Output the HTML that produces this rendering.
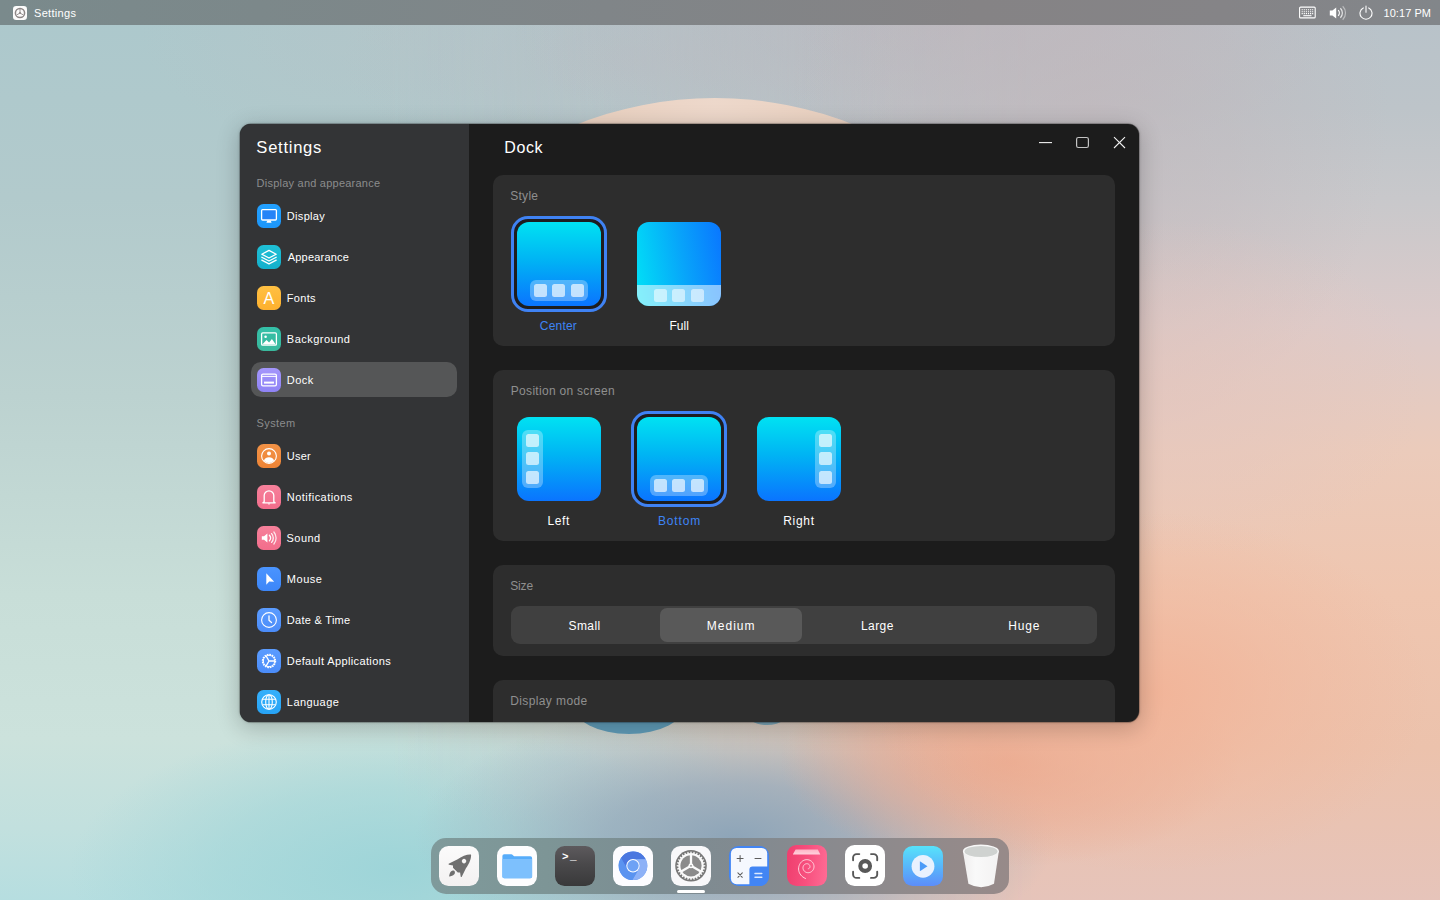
<!DOCTYPE html>
<html lang="en">
<head>
<meta charset="utf-8">
<title>Settings - Dock</title>
<style>
html,body{margin:0;padding:0}
body{width:1440px;height:900px;position:relative;overflow:hidden;font-family:"Liberation Sans", sans-serif;background:#c4d4d4}
.abs{position:absolute}
.t{position:absolute;white-space:pre;line-height:1;font-family:"Liberation Sans", sans-serif}
#wall{position:absolute;left:0;top:0;width:1440px;height:900px;overflow:hidden;
  background:linear-gradient(180deg,#b7c2c9 0%,#bdc4c9 12%,#c8c8cb 22%,#dccbca 36%,#ebcbbb 50%,#efc6b0 66%,#ecc2ac 83%,#e6c4ba 100%)}
#wl{position:absolute;left:0;top:0;width:1440px;height:900px;
  background:linear-gradient(180deg,#acc8cc 0%,#b2cacc 22%,#bcd2d0 44%,#c8ded8 66%,#cce2dc 82%,#c2e0de 92%,#b6dee0 100%);
  -webkit-mask-image:linear-gradient(90deg,#000 0%,#000 27%,rgba(0,0,0,.6) 45%,rgba(0,0,0,.15) 61%,transparent 72%);
  mask-image:linear-gradient(90deg,#000 0%,#000 27%,rgba(0,0,0,.6) 45%,rgba(0,0,0,.15) 61%,transparent 72%)}
#wr{position:absolute;left:0;top:0;width:1440px;height:900px;
  background:
   radial-gradient(ellipse 280px 180px at 1150px 692px, rgba(242,180,152,.95) 0%, rgba(242,183,156,.5) 50%, rgba(242,186,160,0) 100%),
   radial-gradient(ellipse 230px 105px at 1010px 762px, rgba(232,166,140,.95) 0%, rgba(232,168,144,.5) 55%, rgba(232,170,146,0) 100%),
   radial-gradient(ellipse 320px 135px at 735px 838px, rgba(140,164,184,.98) 0%, rgba(144,166,186,.72) 40%, rgba(150,168,186,.3) 72%, rgba(150,170,188,0) 100%),
   radial-gradient(ellipse 170px 60px at 560px 765px, rgba(182,210,214,.6) 0%, rgba(182,210,214,.3) 55%, rgba(182,210,214,0) 100%),
   radial-gradient(ellipse 330px 150px at 400px 870px, rgba(156,212,216,.95) 0%, rgba(158,213,216,.55) 55%, rgba(164,216,218,0) 100%),
   radial-gradient(ellipse 250px 170px at 1175px 390px, rgba(228,198,190,.7) 0%, rgba(228,198,190,.35) 55%, rgba(228,198,190,0) 100%),
   radial-gradient(ellipse 300px 330px at 1090px 110px, rgba(194,182,186,.62) 0%, rgba(194,182,186,.36) 50%, rgba(194,184,188,0) 100%),
   radial-gradient(ellipse 420px 150px at 930px 20px, rgba(190,178,184,.5) 0%, rgba(190,180,186,.25) 55%, rgba(190,180,186,0) 100%),
   radial-gradient(ellipse 300px 120px at 640px 60px, rgba(186,188,194,.5) 0%, rgba(186,188,194,0) 100%),
   radial-gradient(ellipse 260px 130px at 400px 30px, rgba(182,196,200,.6) 0%, rgba(182,196,200,.3) 55%, rgba(182,196,200,0) 100%)}
#sunclip{position:absolute;left:300px;top:90px;width:840px;height:300px;overflow:hidden}
#sun{position:absolute;left:41px;top:8px;width:748px;height:748px;border-radius:50%;
  background:radial-gradient(circle at 50% 0%,#edd8cb 0%,#ead2c2 12%,#e6c6b4 100%)}
#blob1{position:absolute;left:573px;top:676px;width:112px;height:58px;border-radius:50%;background:#5f9ab6}
#blob2{position:absolute;left:742px;top:690px;width:50px;height:35px;border-radius:50%;background:#7aa4b6}
#topbar{position:absolute;left:0;top:0;width:1440px;height:25px;
  background:linear-gradient(90deg,#7a8a8c 0%,#7c888a 18%,#808588 42%,#858385 68%,#858487 85%,#82868a 100%)}
#win{position:absolute;left:239.600px;top:123.600px;width:899px;height:598.300px;border-radius:11px;overflow:hidden;background:#1c1c1c;
  box-shadow:0 0 0 .5px rgba(0,0,0,.35)}
#winshadow{position:absolute;left:239.600px;top:123.600px;width:899px;height:598.300px;border-radius:11px;
  box-shadow:0 5px 22px 2px rgba(0,0,0,.2),0 0 3px rgba(0,0,0,.3)}
#side{position:absolute;left:239.600px;top:123.600px;width:229.600px;height:598.300px;background:#333436;border-radius:11px 0 0 11px}
#sel{position:absolute;left:251px;top:362px;width:206px;height:35px;border-radius:10px;background:#555657}
.card{position:absolute;left:493px;width:622px;background:#2d2d2d;border-radius:10px}
.thumb{width:84px;height:84px;border-radius:12px;overflow:hidden}
#seg{position:absolute;left:511px;top:606px;width:586px;height:38px;border-radius:9px;background:#404040}
#segsel{position:absolute;left:660px;top:608px;width:142px;height:34px;border-radius:7px;background:#595959}
#dock{position:absolute;left:431px;top:838px;width:578px;height:56px;border-radius:15px;
  background:linear-gradient(90deg,#7f9a9b 0%,#7d9596 20%,#7c8c92 40%,#828a90 55%,#8a8a8e 70%,#918a8b 85%,#978a89 100%)}
.tile{width:40px;border-radius:9.500px;overflow:hidden}
#ind{position:absolute;left:677px;top:890px;width:28px;height:3px;border-radius:1.500px;background:#fff}
</style>
</head>
<body>
<div id="wall"><div id="wl"></div><div id="wr"></div><div id="sunclip"><div id="sun"></div></div><div id="blob1"></div><div id="blob2"></div></div>

<div id="topbar"></div>
<svg class="abs" style="left:13px;top:6px" width="14" height="14" viewBox="0 0 14 14">
 <rect width="14" height="14" rx="3.200" fill="#fbfbfb"/>
 <circle cx="7" cy="7" r="4.600" fill="none" stroke="#8d8787" stroke-width="1.500"/>
 <path d="M7 7V3M7 7l3.400 2M7 7L3.600 9" stroke="#9a9494" stroke-width="1" fill="none"/>
 <circle cx="7" cy="7" r="1" fill="#8d8787"/>
</svg>
<span class="t" id="tb_title" style="left:33.99px;top:7.94px;font-size:11px;letter-spacing:0.320px;color:#ffffff;font-weight:400">Settings</span>
<svg class="abs" style="left:1299px;top:6px" width="17" height="13" viewBox="0 0 17 13">
 <rect x=".600" y="1.100" width="15.600" height="10.800" rx="1" fill="none" stroke="#fff" stroke-width="1.100"/>
 <path d="M2.600 3.700h11.600M2.600 5.700h11.600M2.600 7.600h11.600" stroke="#fff" stroke-width="1.100" stroke-dasharray="1.200 .9"/>
 <path d="M4.300 9.700h8.200" stroke="#fff" stroke-width="1.100"/>
</svg>
<svg class="abs" style="left:1329px;top:5px" width="18" height="16" viewBox="0 0 18 16">
 <path d="M.8 5.500h2.600l3.800-3v11l-3.800-3H.8z" fill="#fff"/>
 <path d="M9.200 5.200a4 4 0 0 1 0 5.600" fill="none" stroke="#fff" stroke-width="1.200"/>
 <path d="M11.400 3.300a6.600 6.600 0 0 1 0 9.400" fill="none" stroke="#fff" stroke-width="1.200" opacity=".8"/>
 <path d="M13.700 1.300a9.400 9.400 0 0 1 0 13.400" fill="none" stroke="#fff" stroke-width="1.200" opacity=".45"/>
</svg>
<svg class="abs" style="left:1359px;top:5px" width="14" height="15" viewBox="0 0 14 15">
 <path d="M4.300 2.900a6 6 0 1 0 5.400 0" fill="none" stroke="#fff" stroke-width="1.100" stroke-linecap="round"/>
 <path d="M7 1v6.300" stroke="#fff" stroke-width="1.100" stroke-linecap="round"/>
</svg>
<span class="t" id="tb_clock" style="left:1383.51px;top:7.94px;font-size:11px;letter-spacing:0.057px;color:#ffffff;font-weight:400">10:17 PM</span>

<div id="winshadow"></div>
<div id="win"></div>
<div id="side"></div>
<div id="sel"></div>
<span class="t" id="sb_title" style="left:256.36px;top:140.20px;font-size:16.6px;letter-spacing:0.722px;color:#ffffff;font-weight:400">Settings</span>
<span class="t" id="sb_h1" style="left:256.61px;top:177.94px;font-size:11px;letter-spacing:0.227px;color:#8b8c8d;font-weight:400">Display and appearance</span>
<svg class="abs" style="left:257px;top:204px" width="24" height="24" viewBox="0 0 24 24"><defs><linearGradient id="g_display" x1="0" y1="0" x2="0" y2="1"><stop offset="0" stop-color="#22a0ff"/><stop offset="1" stop-color="#1c96fa"/></linearGradient></defs><rect width="24" height="24" rx="6.500" fill="url(#g_display)"/><rect x="4.6" y="5.6" width="14.8" height="10.4" rx="1" fill="#2684f7" stroke="#fff" stroke-width="1.3"/><path d="M10.3 16.4h3.4l.9 2.3H9.4z" fill="#fff"/></svg><svg class="abs" style="left:257px;top:245px" width="24" height="24" viewBox="0 0 24 24"><defs><linearGradient id="g_appearance" x1="0" y1="0" x2="0" y2="1"><stop offset="0" stop-color="#1fc0d6"/><stop offset="1" stop-color="#14b0cc"/></linearGradient></defs><rect width="24" height="24" rx="6.500" fill="url(#g_appearance)"/><path d="M12 5.400l7.200 3.800-7.200 3.800-7.200-3.800z" stroke="#fff" fill="none" stroke-width="1.3" stroke-linecap="round" stroke-linejoin="round"/><path d="M4.800 12.200l7.200 3.800 7.200-3.800" stroke="#fff" fill="none" stroke-width="1.3" stroke-linecap="round" stroke-linejoin="round"/><path d="M4.800 15.100l7.200 3.800 7.200-3.800" stroke="#fff" fill="none" stroke-width="1.3" stroke-linecap="round" stroke-linejoin="round"/></svg><svg class="abs" style="left:257px;top:286px" width="24" height="24" viewBox="0 0 24 24"><defs><linearGradient id="g_fonts" x1="0" y1="0" x2="0" y2="1"><stop offset="0" stop-color="#ffc043"/><stop offset="1" stop-color="#fdb02e"/></linearGradient></defs><rect width="24" height="24" rx="6.500" fill="url(#g_fonts)"/><text x="12" y="17.800" text-anchor="middle" font-family='"Liberation Sans", sans-serif' font-size="16.200" fill="#fff">A</text></svg><svg class="abs" style="left:257px;top:327px" width="24" height="24" viewBox="0 0 24 24"><defs><linearGradient id="g_background" x1="0" y1="0" x2="0" y2="1"><stop offset="0" stop-color="#34c0a8"/><stop offset="1" stop-color="#3ab89c"/></linearGradient></defs><rect width="24" height="24" rx="6.500" fill="url(#g_background)"/><rect x="4.6" y="5.9" width="14.8" height="12.2" rx="1.2" stroke="#fff" stroke-width="1.3" fill="none"/><circle cx="8.6" cy="9.7" r="1.3" fill="#fff"/><path d="M5.2 17.5l4.3-4.6 2.6 2.6 2.8-3.6 3.9 5.6z" fill="#fff"/></svg><svg class="abs" style="left:257px;top:368px" width="24" height="24" viewBox="0 0 24 24"><defs><linearGradient id="g_dock" x1="0" y1="0" x2="0" y2="1"><stop offset="0" stop-color="#a496fb"/><stop offset="1" stop-color="#8f83f5"/></linearGradient></defs><rect width="24" height="24" rx="6.500" fill="url(#g_dock)"/><rect x="4.6" y="6.2" width="14.8" height="11.6" rx="1.4" stroke="#fff" stroke-width="1.3" fill="none"/><path d="M4.6 8.4h14.8" stroke="#fff" stroke-width="1"/><rect x="7" y="13.6" width="10" height="2" fill="#fff"/></svg><svg class="abs" style="left:257px;top:444px" width="24" height="24" viewBox="0 0 24 24"><defs><linearGradient id="g_user" x1="0" y1="0" x2="0" y2="1"><stop offset="0" stop-color="#f29246"/><stop offset="1" stop-color="#ee8436"/></linearGradient></defs><rect width="24" height="24" rx="6.500" fill="url(#g_user)"/><circle cx="12" cy="12" r="7.4" stroke="#fff" stroke-width="1.1" fill="none"/><circle cx="12" cy="9.6" r="2" fill="#fff"/><path d="M6.9 16.6a5.6 5.6 0 0 1 10.2 0A7 7 0 0 1 12 19a7 7 0 0 1-5.100-2.400z" fill="#fff"/></svg><svg class="abs" style="left:257px;top:485px" width="24" height="24" viewBox="0 0 24 24"><defs><linearGradient id="g_notifications" x1="0" y1="0" x2="0" y2="1"><stop offset="0" stop-color="#f6819b"/><stop offset="1" stop-color="#f26d8b"/></linearGradient></defs><rect width="24" height="24" rx="6.500" fill="url(#g_notifications)"/><path d="M7.2 16.800v-6.200a4.800 4.800 0 0 1 9.600 0v6.200l1.300 1H5.900z" stroke="#fff" fill="none" stroke-width="1.3" stroke-linecap="round" stroke-linejoin="round" stroke-width="1.1"/><path d="M10.600 18.500a1.500 1.500 0 0 0 2.800 0z" fill="#fff"/></svg><svg class="abs" style="left:257px;top:526px" width="24" height="24" viewBox="0 0 24 24"><defs><linearGradient id="g_sound" x1="0" y1="0" x2="0" y2="1"><stop offset="0" stop-color="#f6819b"/><stop offset="1" stop-color="#f26d8b"/></linearGradient></defs><rect width="24" height="24" rx="6.500" fill="url(#g_sound)"/><path d="M4.800 10.200h2.200l3.400-2.800v9.200l-3.400-2.800H4.800z" fill="#fff"/><path d="M12.400 9.300a4 4 0 0 1 0 5.400" stroke="#fff" fill="none" stroke-width="1.3" stroke-linecap="round" stroke-linejoin="round" stroke-width="1.2"/><path d="M14.600 7.600a6.600 6.600 0 0 1 0 8.800" stroke="#fff" fill="none" stroke-width="1.3" stroke-linecap="round" stroke-linejoin="round" stroke-width="1.2" opacity=".9"/><path d="M16.900 6a9.300 9.300 0 0 1 0 12" stroke="#fff" fill="none" stroke-width="1.3" stroke-linecap="round" stroke-linejoin="round" stroke-width="1.2" opacity=".8"/></svg><svg class="abs" style="left:257px;top:567px" width="24" height="24" viewBox="0 0 24 24"><defs><linearGradient id="g_mouse" x1="0" y1="0" x2="0" y2="1"><stop offset="0" stop-color="#4a94ff"/><stop offset="1" stop-color="#3c86f8"/></linearGradient></defs><rect width="24" height="24" rx="6.500" fill="url(#g_mouse)"/><path d="M9.300 6.200v11.600l2.900-3.200 5 .1z" fill="#fff"/></svg><svg class="abs" style="left:257px;top:608px" width="24" height="24" viewBox="0 0 24 24"><defs><linearGradient id="g_datetime" x1="0" y1="0" x2="0" y2="1"><stop offset="0" stop-color="#5b9cff"/><stop offset="1" stop-color="#4b8cf9"/></linearGradient></defs><rect width="24" height="24" rx="6.500" fill="url(#g_datetime)"/><circle cx="12" cy="12" r="7.400" stroke="#fff" stroke-width="1.1" fill="none"/><path d="M12 7.800v4.400l2.500 2.300" stroke="#fff" fill="none" stroke-width="1.3" stroke-linecap="round" stroke-linejoin="round" stroke-width="1.2"/></svg><svg class="abs" style="left:257px;top:649px" width="24" height="24" viewBox="0 0 24 24"><defs><linearGradient id="g_defaultapps" x1="0" y1="0" x2="0" y2="1"><stop offset="0" stop-color="#5b9cff"/><stop offset="1" stop-color="#4b8cf9"/></linearGradient></defs><rect width="24" height="24" rx="6.500" fill="url(#g_defaultapps)"/><circle cx="12" cy="12" r="6.600" stroke="#fff" stroke-width="1.2" fill="none" stroke-dasharray="1.7 0.9"/><circle cx="12" cy="12" r="5.700" stroke="#fff" stroke-width="1" fill="none"/><path d="M12 12l5.600 0M12 12l-2.800 4.900M12 12l-2.800-4.900" stroke="#fff" fill="none" stroke-width="1.3" stroke-linecap="round" stroke-linejoin="round" stroke-width="1.1"/></svg><svg class="abs" style="left:257px;top:690px" width="24" height="24" viewBox="0 0 24 24"><defs><linearGradient id="g_language" x1="0" y1="0" x2="0" y2="1"><stop offset="0" stop-color="#35b0fb"/><stop offset="1" stop-color="#27a3f5"/></linearGradient></defs><rect width="24" height="24" rx="6.500" fill="url(#g_language)"/><circle cx="12" cy="12" r="7.300" stroke="#fff" stroke-width="1.1" fill="none"/><ellipse cx="12" cy="12" rx="3.300" ry="7.300" stroke="#fff" stroke-width="1.1" fill="none"/><path d="M5.600 9.300h12.800M5.600 14.700h12.800M12 4.700v14.600" stroke="#fff" stroke-width="1.1" fill="none"/></svg>
<span class="t" id="sb_1" style="left:286.85px;top:210.94px;font-size:11px;letter-spacing:0.308px;color:#ffffff;font-weight:400">Display</span><span class="t" id="sb_2" style="left:287.69px;top:251.94px;font-size:11px;letter-spacing:0.215px;color:#ffffff;font-weight:400">Appearance</span><span class="t" id="sb_3" style="left:286.85px;top:292.94px;font-size:11px;letter-spacing:0.300px;color:#ffffff;font-weight:400">Fonts</span><span class="t" id="sb_4" style="left:286.85px;top:333.94px;font-size:11px;letter-spacing:0.488px;color:#ffffff;font-weight:400">Background</span><span class="t" id="sb_5" style="left:286.85px;top:374.94px;font-size:11px;letter-spacing:0.453px;color:#ffffff;font-weight:400">Dock</span><span class="t" id="sb_6" style="left:286.85px;top:450.94px;font-size:11px;letter-spacing:0.187px;color:#ffffff;font-weight:400">User</span><span class="t" id="sb_7" style="left:286.85px;top:491.94px;font-size:11px;letter-spacing:0.455px;color:#ffffff;font-weight:400">Notifications</span><span class="t" id="sb_8" style="left:286.61px;top:532.94px;font-size:11px;letter-spacing:0.420px;color:#ffffff;font-weight:400">Sound</span><span class="t" id="sb_9" style="left:286.85px;top:573.94px;font-size:11px;letter-spacing:0.520px;color:#ffffff;font-weight:400">Mouse</span><span class="t" id="sb_10" style="left:286.85px;top:614.94px;font-size:11px;letter-spacing:0.280px;color:#ffffff;font-weight:400">Date &amp; Time</span><span class="t" id="sb_11" style="left:286.85px;top:655.94px;font-size:11px;letter-spacing:0.379px;color:#ffffff;font-weight:400">Default Applications</span><span class="t" id="sb_12" style="left:286.85px;top:696.94px;font-size:11px;letter-spacing:0.435px;color:#ffffff;font-weight:400">Language</span>
<span class="t" id="sb_h2" style="left:256.61px;top:417.94px;font-size:11px;letter-spacing:0.368px;color:#8b8c8d;font-weight:400">System</span>

<span class="t" id="m_title" style="left:504.36px;top:139.71px;font-size:16px;letter-spacing:0.560px;color:#ffffff;font-weight:400">Dock</span>
<svg class="abs" style="left:1034px;top:132px" width="100" height="22" viewBox="0 0 100 22">
 <path d="M5 10.600h13" stroke="#f2f2f2" stroke-width="1.100"/>
 <rect x="42.600" y="5.500" width="11.800" height="10" rx="1.800" fill="none" stroke="#c4c4c4" stroke-width="1.200"/>
 <path d="M80 5.200l11 10.800M91 5.200L80 16" stroke="#f2f2f2" stroke-width="1.100"/>
</svg>

<div class="card" style="top:175px;height:171px"></div>
<div class="card" style="top:370px;height:171px"></div>
<div class="card" style="top:565px;height:91px"></div>
<div class="card" style="top:680px;height:42px;border-radius:10px 10px 0 0"></div>

<span class="t" id="c1_label" style="left:510.16px;top:190.09px;font-size:12px;letter-spacing:0.300px;color:#8f8f8f;font-weight:400">Style</span>
<div class="abs" style="left:511px;top:216px;width:96px;height:96px;border-radius:17px;box-sizing:border-box;border:3px solid #3f82f3;background:#1d1d1f"></div><div class="abs thumb" style="left:517px;top:222px;background:linear-gradient(180deg,#00e2f2 0%,#00b4f4 45%,#0a74ff 100%)"><div style="position:absolute;left:13px;top:58px;width:58px;height:20.500px;border-radius:6px;background:rgba(255,255,255,.3)"></div><div style="position:absolute;width:13px;height:13px;border-radius:2.500px;background:rgba(255,255,255,.66);left:17px;top:61.700px"></div><div style="position:absolute;width:13px;height:13px;border-radius:2.500px;background:rgba(255,255,255,.66);left:35.3px;top:61.700px"></div><div style="position:absolute;width:13px;height:13px;border-radius:2.500px;background:rgba(255,255,255,.66);left:53.7px;top:61.700px"></div></div>
<div class="abs thumb" style="left:637px;top:222px;background:linear-gradient(80deg,#00e2f6 0%,#08a4fa 55%,#0a76ff 100%)"><div style="position:absolute;left:0;top:63px;width:84px;height:21px;background:rgba(255,255,255,.52)"></div><div style="position:absolute;width:13px;height:13px;border-radius:2.500px;background:rgba(255,255,255,.66);left:17px;top:67px;background:rgba(255,255,255,.55)"></div><div style="position:absolute;width:13px;height:13px;border-radius:2.500px;background:rgba(255,255,255,.66);left:35.3px;top:67px;background:rgba(255,255,255,.55)"></div><div style="position:absolute;width:13px;height:13px;border-radius:2.500px;background:rgba(255,255,255,.66);left:53.7px;top:67px;background:rgba(255,255,255,.55)"></div></div>
<span class="t" id="c1_center" style="left:539.82px;top:320.09px;font-size:12px;letter-spacing:0.208px;color:#3d84f5;font-weight:400">Center</span><span class="t" id="c1_full" style="left:669.44px;top:320.09px;font-size:12px;letter-spacing:0.026px;color:#ffffff;font-weight:400">Full</span>

<span class="t" id="c2_label" style="left:510.82px;top:385.09px;font-size:12px;letter-spacing:0.295px;color:#8f8f8f;font-weight:400">Position on screen</span>
<div class="abs thumb" style="left:517px;top:417px;background:linear-gradient(180deg,#00e2f2 0%,#00b4f4 45%,#0a74ff 100%)"><div style="position:absolute;left:5.300px;top:13px;width:20.500px;height:58px;border-radius:6px;background:rgba(255,255,255,.3)"></div><div style="position:absolute;width:13px;height:13px;border-radius:2.500px;background:rgba(255,255,255,.66);left:9px;top:17px"></div><div style="position:absolute;width:13px;height:13px;border-radius:2.500px;background:rgba(255,255,255,.66);left:9px;top:35.3px"></div><div style="position:absolute;width:13px;height:13px;border-radius:2.500px;background:rgba(255,255,255,.66);left:9px;top:53.7px"></div></div>
<div class="abs" style="left:631px;top:411px;width:96px;height:96px;border-radius:17px;box-sizing:border-box;border:3px solid #3f82f3;background:#1d1d1f"></div><div class="abs thumb" style="left:637px;top:417px;background:linear-gradient(180deg,#00e2f2 0%,#00b4f4 45%,#0a74ff 100%)"><div style="position:absolute;left:13px;top:58px;width:58px;height:20.500px;border-radius:6px;background:rgba(255,255,255,.3)"></div><div style="position:absolute;width:13px;height:13px;border-radius:2.500px;background:rgba(255,255,255,.66);left:17px;top:61.700px"></div><div style="position:absolute;width:13px;height:13px;border-radius:2.500px;background:rgba(255,255,255,.66);left:35.3px;top:61.700px"></div><div style="position:absolute;width:13px;height:13px;border-radius:2.500px;background:rgba(255,255,255,.66);left:53.7px;top:61.700px"></div></div>
<div class="abs thumb" style="left:757px;top:417px;background:linear-gradient(180deg,#00e2f2 0%,#00b4f4 45%,#0a74ff 100%)"><div style="position:absolute;left:58.200px;top:13px;width:20.500px;height:58px;border-radius:6px;background:rgba(255,255,255,.3)"></div><div style="position:absolute;width:13px;height:13px;border-radius:2.500px;background:rgba(255,255,255,.66);left:62px;top:17px"></div><div style="position:absolute;width:13px;height:13px;border-radius:2.500px;background:rgba(255,255,255,.66);left:62px;top:35.3px"></div><div style="position:absolute;width:13px;height:13px;border-radius:2.500px;background:rgba(255,255,255,.66);left:62px;top:53.7px"></div></div>
<span class="t" id="c2_left" style="left:547.40px;top:515.09px;font-size:12px;letter-spacing:0.613px;color:#ffffff;font-weight:400">Left</span><span class="t" id="c2_bottom" style="left:657.92px;top:515.09px;font-size:12px;letter-spacing:0.848px;color:#3d84f5;font-weight:400">Bottom</span><span class="t" id="c2_right" style="left:783.16px;top:515.09px;font-size:12px;letter-spacing:0.720px;color:#ffffff;font-weight:400">Right</span>

<span class="t" id="c3_label" style="left:510.16px;top:580.09px;font-size:12px;letter-spacing:-0.105px;color:#8f8f8f;font-weight:400">Size</span>
<div id="seg"></div><div id="segsel"></div>
<span class="t" id="c3_small" style="left:568.44px;top:620.09px;font-size:12px;letter-spacing:0.440px;color:#ffffff;font-weight:400">Small</span><span class="t" id="c3_medium" style="left:706.78px;top:620.09px;font-size:12px;letter-spacing:1.024px;color:#ffffff;font-weight:400">Medium</span><span class="t" id="c3_large" style="left:860.92px;top:620.09px;font-size:12px;letter-spacing:0.440px;color:#ffffff;font-weight:400">Large</span><span class="t" id="c3_huge" style="left:1008.16px;top:620.09px;font-size:12px;letter-spacing:0.879px;color:#ffffff;font-weight:400">Huge</span>
<span class="t" id="c4_label" style="left:510.16px;top:695.09px;font-size:12px;letter-spacing:0.394px;color:#8f8f8f;font-weight:400">Display mode</span>

<div id="dock"></div>
<div class="abs tile" style="left:439px;top:845.7px;height:40.3px;background:linear-gradient(180deg,#fbfbfb,#f3f1f1)"><svg width="40" height="40.3" viewBox="0 0 40 40.3" style="display:block"><g transform="matrix(.7071 -.7071 .7071 .7071 21.5 19)" fill="#707070"><path d="M14.900 0C13-2.600 7.500-5.300 1.500-6.200L-7.600-9.200Q-8.400-9-8-8.300L-5.600-5-7.200-3.400V3.400L-5.600 5-8 8.300Q-8.400 9-7.600 9.200L1.500 6.200C7.500 5.300 13 2.600 14.900 0z"/><path d="M-8.500 0C-9.400-3-12.500-2.800-16.200 0-12.500 2.800-9.400 3-8.500 0z"/><circle cx="5.200" cy="-.2" r="2.200" fill="#f7f6f6"/></g></svg></div><div class="abs tile" style="left:497px;top:845.7px;height:40.3px;background:#fdfdfe"><svg width="40" height="40.3" viewBox="0 0 40 40.3" style="display:block"><path d="M5.400 10a1.800 1.800 0 0 1 1.800-1.800h7.100c.6 0 1 .2 1.400.7l1.400 1.400h16.200a1.800 1.800 0 0 1 1.800 1.800v18.400a1.800 1.800 0 0 1-1.800 1.800H7.200a1.800 1.800 0 0 1-1.800-1.800z" fill="#56acfa"/><path d="M5.400 13h29.700v17.500a1.800 1.800 0 0 1-1.800 1.800H7.200a1.800 1.800 0 0 1-1.800-1.800z" fill="#7dc0fd"/></svg></div><div class="abs tile" style="left:555px;top:845.7px;height:40.3px;background:linear-gradient(180deg,#5d5a5d 0%,#4a494b 45%,#39393a 100%)"><svg width="40" height="40.3" viewBox="0 0 40 40.3" style="display:block"><text x="7" y="14.200" font-family='"Liberation Mono", monospace' font-size="11" font-weight="700" letter-spacing="1.300" fill="#fff">&gt;_</text></svg></div><div class="abs tile" style="left:613px;top:845.7px;height:40.3px;background:#fcfcff"><svg width="40" height="40.3" viewBox="0 0 40 40.3" style="display:block"><g transform="translate(20 19.800)"><circle r="14.300" fill="#5a93f0"/><path d="M0-6.600H12.690A14.300 14.300 0 0 0-12.060-7.690L-5.720 3.300A6.600 6.600 0 0 1 0-6.600z" fill="#4a77e0"/><path d="M0-6.600H12.690A14.300 14.300 0 0 0-12.060-7.690L-5.720 3.300A6.600 6.600 0 0 1 0-6.600z" fill="#8db1f7" transform="rotate(120)"/><path d="M0-6.600H12.690A14.300 14.300 0 0 0-12.060-7.690L-5.720 3.300A6.600 6.600 0 0 1 0-6.600z" fill="#5a93f0" transform="rotate(240)"/><circle r="6.700" fill="#fff"/><circle r="5.700" fill="#6ea2f5"/></g></svg></div><div class="abs tile" style="left:671px;top:845.7px;height:40.3px;background:#f8f8fa"><svg width="40" height="40.3" viewBox="0 0 40 40.3" style="display:block"><g transform="translate(20 19.800)"><circle r="15.800" fill="#777"/><g fill="#fafafa"><circle r="12.700"/><path d="M-.9-12.200L-.45-14.300H.45L.9-12.200z" transform="rotate(0.00)"/><path d="M-.9-12.200L-.45-14.300H.45L.9-12.200z" transform="rotate(12.86)"/><path d="M-.9-12.200L-.45-14.300H.45L.9-12.200z" transform="rotate(25.71)"/><path d="M-.9-12.200L-.45-14.300H.45L.9-12.200z" transform="rotate(38.57)"/><path d="M-.9-12.200L-.45-14.300H.45L.9-12.200z" transform="rotate(51.43)"/><path d="M-.9-12.200L-.45-14.300H.45L.9-12.200z" transform="rotate(64.29)"/><path d="M-.9-12.200L-.45-14.300H.45L.9-12.200z" transform="rotate(77.14)"/><path d="M-.9-12.200L-.45-14.300H.45L.9-12.200z" transform="rotate(90.00)"/><path d="M-.9-12.200L-.45-14.300H.45L.9-12.200z" transform="rotate(102.86)"/><path d="M-.9-12.200L-.45-14.300H.45L.9-12.200z" transform="rotate(115.71)"/><path d="M-.9-12.200L-.45-14.300H.45L.9-12.200z" transform="rotate(128.57)"/><path d="M-.9-12.200L-.45-14.300H.45L.9-12.200z" transform="rotate(141.43)"/><path d="M-.9-12.200L-.45-14.300H.45L.9-12.200z" transform="rotate(154.29)"/><path d="M-.9-12.200L-.45-14.300H.45L.9-12.200z" transform="rotate(167.14)"/><path d="M-.9-12.200L-.45-14.300H.45L.9-12.200z" transform="rotate(180.00)"/><path d="M-.9-12.200L-.45-14.300H.45L.9-12.200z" transform="rotate(192.86)"/><path d="M-.9-12.200L-.45-14.300H.45L.9-12.200z" transform="rotate(205.71)"/><path d="M-.9-12.200L-.45-14.300H.45L.9-12.200z" transform="rotate(218.57)"/><path d="M-.9-12.200L-.45-14.300H.45L.9-12.200z" transform="rotate(231.43)"/><path d="M-.9-12.200L-.45-14.300H.45L.9-12.200z" transform="rotate(244.29)"/><path d="M-.9-12.200L-.45-14.300H.45L.9-12.200z" transform="rotate(257.14)"/><path d="M-.9-12.200L-.45-14.300H.45L.9-12.200z" transform="rotate(270.00)"/><path d="M-.9-12.200L-.45-14.300H.45L.9-12.200z" transform="rotate(282.86)"/><path d="M-.9-12.200L-.45-14.300H.45L.9-12.200z" transform="rotate(295.71)"/><path d="M-.9-12.200L-.45-14.300H.45L.9-12.200z" transform="rotate(308.57)"/><path d="M-.9-12.200L-.45-14.300H.45L.9-12.200z" transform="rotate(321.43)"/><path d="M-.9-12.200L-.45-14.300H.45L.9-12.200z" transform="rotate(334.29)"/><path d="M-.9-12.200L-.45-14.300H.45L.9-12.200z" transform="rotate(347.14)"/></g><circle r="10.600" fill="#8b8b8b"/><g stroke="#fafafa" stroke-width="2.300" stroke-linecap="butt"><path d="M0 0V-11.400" transform="rotate(0)"/><path d="M0 0V-11.400" transform="rotate(120)"/><path d="M0 0V-11.400" transform="rotate(240)"/></g><circle r="2.500" fill="#fafafa"/><circle r=".9" fill="#8b8b8b"/></g></svg></div><div class="abs tile" style="left:729px;top:845.8px;height:40px;background:#4285f4"><svg width="40" height="40" viewBox="0 0 40 40" style="display:block"><rect x="1.900" y="1.900" width="36.300" height="36.300" rx="5.600" fill="#f5f8fe"/><path d="M20.400 23.600a3.200 3.200 0 0 1 3.200-3.200H40V40H20.400z" fill="#4285f4"/><g stroke="#5c5c5c" stroke-width="1.050" stroke-linecap="round"><path d="M8.100 12.400h6M11.100 9.400v6M26 12.400h6M8.900 26.900l4.400 4.400M13.300 26.900l-4.400 4.400"/></g><g stroke="#dce9ff" stroke-width="1.500" stroke-linecap="round"><path d="M26 27.600h6.800M26 31.200h6.800"/></g></svg></div><div class="abs tile" style="left:787px;top:845px;height:40.5px;background:linear-gradient(95deg,#ef3e6e 0%,#f7507e 50%,#ff6c95 100%)"><svg width="40" height="40.5" viewBox="0 0 40 40.5" style="display:block"><defs><linearGradient id="g_deb" x1="0" y1="0" x2="0" y2="1"><stop offset="0" stop-color="#ffb4c6"/><stop offset="1" stop-color="#ffd3de"/></linearGradient></defs><path d="M8.600 4.600h22.200l2.500 5H5.800z" fill="url(#g_deb)"/><path d="M21.25 23.73L21.49 23.69L21.73 23.61L21.97 23.49L22.20 23.33L22.41 23.13L22.60 22.90L22.76 22.63L22.88 22.33L22.97 22.01L23.00 21.67L22.99 21.31L22.93 20.95L22.81 20.59L22.64 20.24L22.42 19.91L22.15 19.60L21.83 19.33L21.46 19.10L21.06 18.91L20.62 18.78L20.16 18.71L19.68 18.70L19.19 18.76L18.71 18.89L18.24 19.09L17.79 19.35L17.37 19.68L16.99 20.07L16.66 20.52L16.39 21.02L16.18 21.56L16.05 22.14L15.99 22.74L16.02 23.35L16.13 23.96L16.33 24.57L16.61 25.15L16.98 25.70L17.42 26.20L17.93 26.65L18.51 27.03L19.14 27.33L19.82 27.55L20.54 27.68L21.28 27.71L22.02 27.65L22.76 27.48L23.48 27.21L24.17 26.83L24.82 26.37L25.40 25.81L25.91 25.17L26.33 24.46L26.67 23.69L26.89 22.87L27.01 22.02L27.02 21.14L26.90 20.27L26.67 19.40L26.32 18.57L25.85 17.77L25.28 17.04L24.60 16.38L23.84 15.82L22.99 15.35L22.08 15.00L21.12 14.77L20.13 14.66L19.12 14.69L18.11 14.86L17.13 15.16L16.18 15.60L15.29 16.16L14.47 16.85L13.74 17.64L13.13 18.54L12.59 19.51L12.15 20.55L11.83 21.65L11.64 22.82L11.59 24.03L11.70 25.26L11.98 26.50L12.42 27.73L13.04 28.92L13.83 30.04L14.78 31.08L15.89 32.00L17.14 32.79L18.52 33.43" fill="none" stroke="#ffd3de" stroke-width="1" stroke-linecap="round" stroke-linejoin="round"/></svg></div><div class="abs tile" style="left:845px;top:845px;height:40.5px;background:#ffffff"><svg width="40" height="40.5" viewBox="0 0 40 40.5" style="display:block"><g fill="none" stroke="#585858" stroke-width="1.900" stroke-linecap="round"><path d="M8.100 15.300v-2.700a3.500 3.500 0 0 1 3.500-3.500h2.700M26 9.100h2.700a3.500 3.500 0 0 1 3.500 3.500v2.700M32.200 26.700v2.700a3.500 3.500 0 0 1-3.500 3.500H26M14.300 32.900h-2.700a3.500 3.500 0 0 1-3.500-3.500v-2.700"/></g><circle cx="20.150" cy="21" r="4.850" fill="none" stroke="#585858" stroke-width="4.100"/></svg></div><div class="abs tile" style="left:903px;top:845.7px;height:40.2px;background:linear-gradient(180deg,#57e3fb 0%,#58bcfb 45%,#5c8dfa 100%)"><svg width="40" height="40.2" viewBox="0 0 40 40.2" style="display:block"><circle cx="20" cy="20.300" r="11.400" fill="#e8f1fe"/><path d="M16.900 15.300l7.600 5-7.600 5z" fill="#4b9bf8"/></svg></div>
<svg class="abs" style="left:961px;top:844px" width="40" height="46" viewBox="0 0 40 46"><defs><linearGradient id="g_tr" x1="0" y1="0" x2="1" y2="0"><stop offset="0" stop-color="#efeeee"/><stop offset=".35" stop-color="#f9f9f9"/><stop offset="1" stop-color="#f3f2f2"/></linearGradient></defs><path d="M1.900 7.100L7.400 39.700Q20.200 46.700 33 39.700L37.900 7.100z" fill="url(#g_tr)"/><ellipse cx="19.900" cy="7.100" rx="18" ry="6.500" fill="#f7f7f7"/><ellipse cx="20" cy="7.500" rx="16.500" ry="5.600" fill="#cfd2d0"/></svg>
<div id="ind"></div>
</body>
</html>
